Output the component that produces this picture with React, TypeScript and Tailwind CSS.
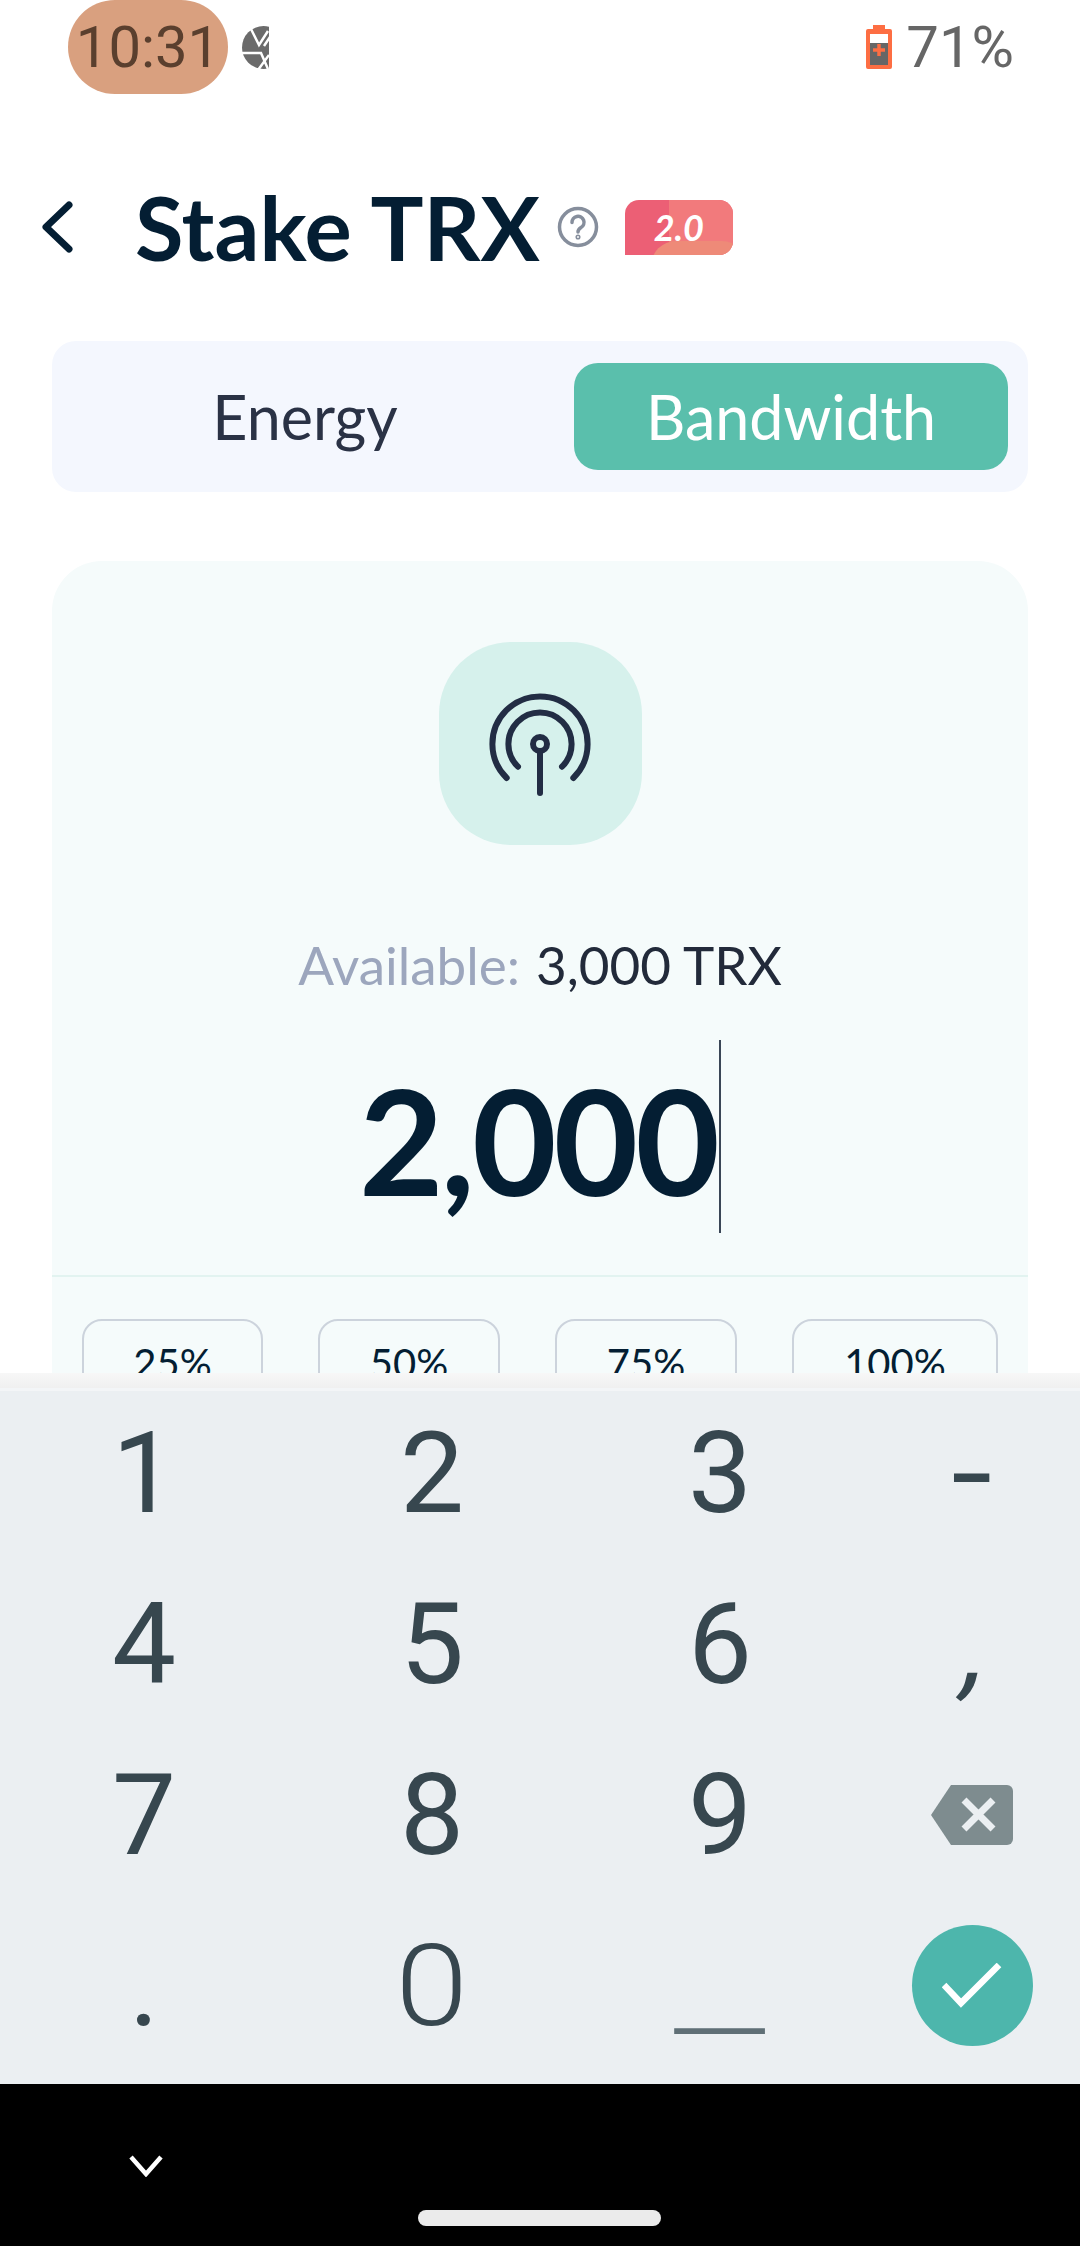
const SANS = "font-['Lato','Open_Sans',sans-serif]";

const PERCENTS = [
  { label: "25%", width: "w-[181px]" },
  { label: "50%", width: "w-[182px]" },
  { label: "75%", width: "w-[182px]" },
  { label: "100%", width: "w-[206px]" },
];

function ShutterIcon() {
  return (
    <svg width="27" height="43" viewBox="0 0 27 43" className="block">
      <circle cx="21.500" cy="21.500" r="21.500" fill="#6b6b6b" />
      <path d="M9 3l8 16 9-14M28 11l-6 9M0 27h19l7 16M27 29L16 44" stroke="#fff" strokeWidth="2.500" fill="none" />
    </svg>
  );
}

function BatteryIcon() {
  return (
    <svg width="26" height="44" viewBox="0 0 26 44" className="block">
      <path d="M7 0h12v4h5a2 2 0 0 1 2 2v36a2 2 0 0 1-2 2H2a2 2 0 0 1-2-2V6a2 2 0 0 1 2-2h5z" fill="#fd6e43" />
      <rect x="4" y="9" width="18" height="9" fill="#fff" />
      <rect x="4" y="18" width="18" height="22" fill="#666" />
      <path d="M13 19v12M7 25h12" stroke="#fd6e43" strokeWidth="3.500" />
    </svg>
  );
}

function StatusBar() {
  return (
    <div className="flex h-[94px] items-start justify-between pl-[68px] pr-[66px]">
      <div className="flex items-center gap-[14px]">
        <div className="flex h-[94px] w-[160px] items-center justify-center rounded-[47px] bg-[#d9a07f] font-['Roboto',sans-serif] text-[58px] text-[#5a3f2e]">
          10:31
        </div>
        <ShutterIcon />
      </div>
      <div className="flex h-[94px] items-center gap-[14px]">
        <BatteryIcon />
        <span className="font-['Roboto',sans-serif] text-[58px] text-[#666666]">71%</span>
      </div>
    </div>
  );
}

function Header() {
  return (
    <div className="mt-[78px] flex h-[110px] items-center pl-[40px]">
      <svg width="34" height="52" viewBox="0 0 34 52" fill="none" stroke="#041e33" strokeWidth="7" strokeLinecap="round" strokeLinejoin="round">
        <path d="M29 4L6 26l23 22" />
      </svg>
      <h1 className={`ml-[61px] text-[88.500px] font-bold leading-none text-[#041e33] ${SANS}`}>Stake TRX</h1>
      <svg width="42" height="42" viewBox="0 0 42 42" fill="none" stroke="#868e9c" strokeWidth="3.500" strokeLinecap="round" className="ml-[17px]">
        <circle cx="21" cy="21" r="18.500" />
        <path d="M15 16.500a6 6 0 1 1 9 5c-2 1.300-3 2.300-3 4.500" />
        <circle cx="21" cy="31" r="0.800" />
      </svg>
      <div className="relative ml-[26px] flex h-[55px] w-[108px] items-center justify-center overflow-hidden rounded-tl-[14px] rounded-r-[14px] bg-[#ec5f75]">
        <div className="absolute inset-y-0 left-[44px] right-0 bg-[#f27a7c]" />
        <div className="absolute bottom-[-36px] right-[-14px] h-[50px] w-[96px] rounded-full bg-[#ee8a78]" />
        <span className={`relative text-[36px] font-bold italic text-white ${SANS}`}>2.0</span>
      </div>
    </div>
  );
}

function Tabs() {
  return (
    <div className={`mx-[52px] mt-[59px] flex h-[151px] items-center rounded-[24px] bg-[#f4f7fe] pl-[22px] pr-[20px] text-[61px] ${SANS}`}>
      <div className="flex h-[107px] w-[462px] items-center justify-center text-[#2a3245]">Energy</div>
      <div className="ml-[38px] flex h-[107px] flex-1 items-center justify-center rounded-[24px] bg-[#5abfac] text-white">Bandwidth</div>
    </div>
  );
}

function StakeCard() {
  return (
    <div className={`mx-[52px] mt-[69px] rounded-t-[50px] bg-[#f5fbfb] pb-[40px] pt-[81px] ${SANS}`}>
      <div className="mx-auto flex h-[203px] w-[203px] items-center justify-center rounded-[72px] bg-[#d6f1ec]">
        <svg width="110" height="110" viewBox="-55 -55 110 110" fill="none" stroke="#222d44" strokeWidth="6" strokeLinecap="round">
          <path d="M-33.300 34A47.600 47.600 0 1 1 33.300 34" />
          <path d="M-22 22.700A31.600 31.600 0 1 1 22 22.700" />
          <circle cx="0" cy="0" r="7" />
          <path d="M0 9V49" />
        </svg>
      </div>
      <div className="mt-[90px] flex h-[60px] items-center justify-center text-[53px]">
        <span className="text-[#9ca6bd]">Available:</span>
        <span className="ml-[16px] text-[#222a3a]">3,000 TRX</span>
      </div>
      <div className="mt-[45px] flex h-[193px] items-center justify-center">
        <span className="pt-[6px] text-[146px] font-bold leading-none tracking-[-3px] text-[#041e33]">2,000</span>
        <span className="ml-[2px] h-[193px] w-[2px] bg-[#3a4656]" />
      </div>
      <div className="mt-[42px] h-[2px] bg-[#e2f3f0]" />
      <div className="mt-[42px] flex justify-between px-[30px]">
        {PERCENTS.map((p) => (
          <div
            key={p.label}
            className={`flex h-[88px] items-center justify-center rounded-[20px] border-2 border-[#ccd3dc] text-[40px] text-[#041e33] ${p.width}`}
          >
            {p.label}
          </div>
        ))}
      </div>
    </div>
  );
}

function BackspaceIcon() {
  return (
    <svg width="82" height="62" viewBox="0 0 82 62">
      <path d="M20 1h56a6 6 0 0 1 6 6v48a6 6 0 0 1-6 6H20L0 31z" fill="#7e8c8f" />
      <path d="M33 16l29 29M62 16L33 45" stroke="#ebeff2" strokeWidth="7" />
    </svg>
  );
}

function Key({ children }: { children: React.ReactNode }) {
  return (
    <div className="flex items-center justify-center pb-[8px] font-['Roboto',sans-serif] text-[114px] leading-none text-[#37474f]">
      {children}
    </div>
  );
}

function Keyboard() {
  return (
    <div className="h-[711px] shrink-0">
      <div className="h-[15px] bg-gradient-to-b from-[#f7f7f7] to-[#f0f0f0]" />
      <div className="h-[3px] bg-[#f3f5f7]" />
      <div className="grid h-[693px] grid-cols-[288px_288px_288px_216px] grid-rows-[171px_171px_171px_171px] bg-[#ebeff2]">
        <Key>1</Key>
        <Key>2</Key>
        <Key>3</Key>
        <Key><span className="scale-x-[1.3]">-</span></Key>
        <Key>4</Key>
        <Key>5</Key>
        <Key>6</Key>
        <Key><span className="translate-x-[6px] translate-y-[2px] -skew-x-[14deg]">,</span></Key>
        <Key>7</Key>
        <Key>8</Key>
        <Key>9</Key>
        <Key><BackspaceIcon /></Key>
        <Key>.</Key>
        <Key><span className="scale-x-[1.15] font-light">0</span></Key>
        <Key><span className="translate-y-[3px] scale-x-[1.85] font-light text-[#5f6f76]">_</span></Key>
        <Key>
          <div className="flex h-[121px] w-[121px] items-center justify-center rounded-full bg-[#4db6ac]">
            <svg width="60" height="46" viewBox="0 0 60 46" fill="none" stroke="#fff" strokeWidth="6.500">
              <path d="M2 22l17 18L57 2" />
            </svg>
          </div>
        </Key>
      </div>
    </div>
  );
}

function NavBar() {
  return (
    <div className="relative flex h-[162px] shrink-0 bg-black">
      <svg width="34" height="22" viewBox="0 0 34 22" fill="none" stroke="#fff" strokeWidth="4.500" className="ml-[129px] mt-[71px]">
        <path d="M2 2l15 17L32 2" />
      </svg>
      <div className="absolute bottom-[20px] left-[418px] h-[16px] w-[243px] rounded-full bg-[#ebebeb]" />
    </div>
  );
}

export default function App() {
  return (
    <div className="flex h-[2246px] w-[1080px] flex-col overflow-hidden bg-white">
      <div className="min-h-0 flex-1 overflow-hidden">
        <StatusBar />
        <Header />
        <Tabs />
        <StakeCard />
      </div>
      <Keyboard />
      <NavBar />
    </div>
  );
}
